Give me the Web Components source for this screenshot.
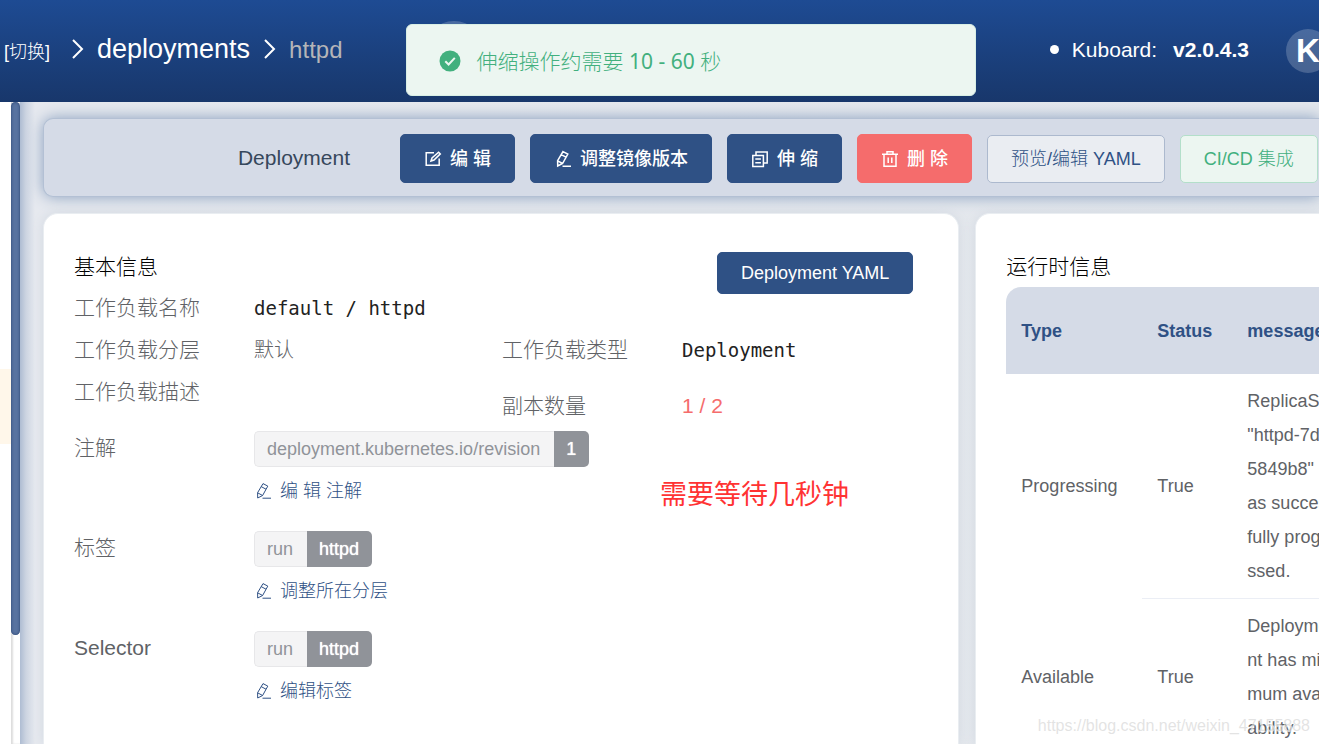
<!DOCTYPE html>
<html lang="zh-CN">
<head>
<meta charset="utf-8">
<title>Kuboard - httpd</title>
<style>
  html { height: 100%; }
  body {
    margin: 0;
    height: 100%;
    overflow: hidden;
    background: #fff;
    font-family: "Liberation Sans", "Noto Sans CJK SC", sans-serif;
    font-weight: 300;
    color: #606266;
  }
</style>
</head>
<body>
<kb-app></kb-app>

<template id="t-icon">
  <style>
    :host { display: inline-block; width: 18px; height: 18px; flex: none; }
    svg { display: block; width: 100%; height: 100%; fill: none; stroke: currentColor; stroke-width: 1.5; }
  </style>
  <svg viewBox="0 0 18 18" aria-hidden="true"></svg>
</template>

<template id="t-button">
  <style>
    :host { display: block; flex: none; }
    button {
      box-sizing: border-box; display: flex; align-items: center; gap: 8px;
      height: 49px; padding: 0 23px; border: 1px solid #2f5185; border-radius: 5px;
      background: #2f5185; color: #fff; white-space: nowrap; cursor: pointer;
      font: 500 18px/24px "Liberation Sans", "Noto Sans CJK SC", sans-serif;
    }
    :host([kind="danger"]) button { background: #f56c6c; border-color: #f56c6c; }
    :host([kind="plain"]) button { height: 48px; background: #eaedf2; border-color: #acb9ce; color: #2f5185; font-weight: 300; }
    :host([kind="success"]) button { height: 48px; background: #ecf6f1; border-color: #b3dfca; color: #42b07e; font-weight: 300; }
    :host([kind="yaml"]) button { height: 42px; font-weight: 400; }
  </style>
  <button type="button"><slot name="icon"></slot><slot></slot></button>
</template>

<template id="t-header">
  <style>
    :host {
      display: flex; align-items: center; box-sizing: border-box; height: 102px; flex: none;
      padding-left: 4px; overflow: hidden; position: relative; color: #fff;
      background: linear-gradient(#1e4b93, #18376b);
    }
    nav { display: flex; align-items: center; white-space: nowrap; font-weight: 400; height: 98px; margin-bottom: 4px; }
    a { color: inherit; text-decoration: none; }
    .switch { font-size: 18px; line-height: 24px; padding-top: 6px; font-weight: 300; }
    .chev { width: 12px; height: 20px; fill: none; stroke: #fff; stroke-width: 2; margin: 0 13px 0 22px; }
    .chev.two { margin: 0 13px 0 14px; }
    .section { font-size: 27px; line-height: 36px; }
    .current { font-size: 24px; line-height: 32px; padding-top: 2px; color: #b5b5b8; }
    .orb { width: 60px; height: 60px; margin-left: 81px; border-radius: 50%; background: rgba(255,255,255,.2); flex: none; }
    .version { display: flex; align-items: center; margin: 0 0 3px auto; font-size: 21px; line-height: 28px; white-space: nowrap; }
    .version i { width: 9px; height: 9px; border-radius: 50%; background: #fff; margin-right: 13px; }
    .version b { font-weight: 700; margin-left: 16px; }
    .avatar {
      width: 44px; height: 44px; margin: 0 -11px 0 37px; border-radius: 50%; flex: none;
      background: rgba(255,255,255,.2); text-align: center; font: 700 33px/44px "Liberation Sans", sans-serif;
    }
  </style>
  <nav aria-label="breadcrumb">
    <a class="switch" href="#">[切换]</a>
    <svg class="chev" viewBox="0 0 12 20"><path d="M1 1l9 9-9 9"/></svg>
    <a class="section" href="#">deployments</a>
    <svg class="chev two" viewBox="0 0 12 20"><path d="M1 1l9 9-9 9"/></svg>
    <span class="current">httpd</span>
  </nav>
  <span class="orb"></span>
  <div class="version"><i></i><span>Kuboard:</span><b>v2.0.4.3</b></div>
  <span class="avatar">K</span>
</template>

<template id="t-toast">
  <style>
    :host {
      position: absolute; z-index: 5; top: 24px; left: calc(50% - 254px); width: 570px; height: 72px;
      box-sizing: border-box; display: flex; align-items: center; gap: 16px; padding: 2px 0 0 32px;
      border: 1px solid #d9efe5; border-radius: 6px; background: #ecf6f1; color: #42b07e;
      font: 300 21px/28px "Noto Sans", "Noto Sans CJK SC", sans-serif;
    }
    svg { width: 22px; height: 22px; flex: none; }
    ::slotted(b) { font-weight: 400; }
  </style>
  <svg viewBox="0 0 22 22" aria-hidden="true"><circle cx="11" cy="11" r="10.5" fill="#42b07e"/><path d="M6.3 11.2l3.3 3.3 6.2-6.6" fill="none" stroke="#ecf6f1" stroke-width="2"/></svg>
  <span><slot></slot></span>
</template>

<template id="t-side">
  <style>
    :host { display: flex; flex: none; width: 20px; background: #fff; }
    .menu { width: 11px; flex: none; }
    .menu div { margin-top: 267px; height: 75px; background: #fff7ea; }
    .track { flex: 1; background: #fff; box-shadow: inset 2px 0 2px #ddd; }
    .thumb { height: 533px; border-radius: 5px; background: #5873a0; box-shadow: inset 0 0 3px #243f6c; }
  </style>
  <div class="menu"><div></div></div>
  <div class="track"><div class="thumb"></div></div>
</template>

<template id="t-toolbar">
  <style>
    :host {
      display: flex; align-items: flex-end; gap: 15px; box-sizing: border-box; height: 79px;
      padding-bottom: 13px; border: 1px solid #b3c0d4; border-right: 0; border-radius: 10px 0 0 10px;
      background: #d5dbe7; box-shadow: 0 0 15px #8ba1c0;
    }
    .name { width: 306px; margin-right: 35px; flex: none; text-align: right; color: #36475c; font-size: 21px; font-weight: 400; line-height: 50px; }
  </style>
  <span class="name">Deployment</span>
  <slot></slot>
</template>

<template id="t-card">
  <style>
    :host {
      display: block; position: relative; box-sizing: border-box; min-width: 0; padding: 31px 45px 0 30px;
      border: 1px solid #e9edf1; border-bottom: 0; border-radius: 15px 15px 0 0; background: #fff; box-shadow: 0 0 12px #d3d9e2;
    }
    :host([flush]) { padding-right: 0; border-right: 0; border-top-right-radius: 0; overflow: hidden; }
    header { display: flex; justify-content: space-between; align-items: flex-start; height: 42px; }
    h2 { margin: 0; font-size: 21px; font-weight: 300; line-height: 44px; color: #000; white-space: nowrap; }
    ::slotted([slot="action"]) { margin-top: 7px; }
  </style>
  <header><h2><slot name="title"></slot></h2><slot name="action"></slot></header>
  <slot></slot>
</template>

<template id="t-field">
  <style>
    :host { display: grid; grid-template-columns: 180px 1fr; font-size: 21px; line-height: 42px; white-space: nowrap; }
    .value { font-size: 20px; min-width: 0; }
    :host([mono]) .value { font: 400 19px/42px "DejaVu Sans Mono", monospace; color: #222; }
    :host([alert]) .value { font-size: 21px; font-weight: 400; color: #f56c6c; }
  </style>
  <span><slot name="label"></slot></span>
  <div class="value"><slot></slot></div>
</template>

<template id="t-tag">
  <style>
    :host { display: flex; width: max-content; height: 36px; margin: 4px 0 3px; font-size: 18px; line-height: 36px; font-weight: 400; }
    .key, .val { box-sizing: border-box; padding: 0 13px 0 12px; }
    .key { border: 1px solid #e7e7e9; border-right: 0; border-radius: 5px 0 0 5px; background: #f4f4f5; color: #909399; line-height: 34px; padding-right: 14px; }
    .val { border-radius: 0 5px 5px 0; background: #909399; color: #fff; text-shadow: 0 0 1px #fff; }
  </style>
  <span class="key"><slot name="key"></slot></span><span class="val"><slot></slot></span>
</template>

<template id="t-link">
  <style>
    :host { display: block; height: 42px; margin-bottom: 15px; font-size: 18px; line-height: 42px; }
    a { display: inline-flex; align-items: center; gap: 8px; color: #2f5185; text-decoration: none; }
  </style>
  <a href="#"><kb-icon name="edit-line" thin></kb-icon><span><slot></slot></span></a>
</template>

<template id="t-basic">
  <style>
    :host { display: block; }
    .pairs { display: grid; grid-template-columns: 428px 1fr; }
    .wide { grid-column: 1 / -1; }
    .late { margin-top: 14px; }
    .note { position: absolute; left: 616px; top: 261px; font-size: 27px; font-weight: 400; line-height: 40px; color: #ff3333; white-space: nowrap; }
  </style>
  <div class="pairs">
    <kb-field class="wide" mono><span slot="label">工作负载名称</span>default / httpd</kb-field>
    <kb-field><span slot="label">工作负载分层</span>默认</kb-field>
    <kb-field mono><span slot="label">工作负载类型</span>Deployment</kb-field>
    <kb-field><span slot="label">工作负载描述</span></kb-field>
    <kb-field class="late" alert><span slot="label">副本数量</span>1 / 2</kb-field>
  </div>
  <kb-field><span slot="label">注解</span><kb-tag><span slot="key">deployment.kubernetes.io/revision</span>1</kb-tag><kb-link>编 辑 注解</kb-link></kb-field>
  <kb-field><span slot="label">标签</span><kb-tag><span slot="key">run</span>httpd</kb-tag><kb-link>调整所在分层</kb-link></kb-field>
  <kb-field><span slot="label">Selector</span><kb-tag><span slot="key">run</span>httpd</kb-tag><kb-link>编辑标签</kb-link></kb-field>
  <span class="note">需要等待几秒钟</span>
</template>

<template id="t-conditions">
  <style>
    :host { display: block; overflow: hidden; border-radius: 15px 0 0 0; }
    table { width: 100%; table-layout: fixed; border-collapse: collapse; font-size: 18px; line-height: 34px; font-weight: 400; }
    th, td { padding: 10px 0 10px 15px; text-align: left; white-space: nowrap; overflow: hidden; }
    th { height: 67px; background: #d5dbe7; color: #2f5185; font-weight: 700; }
    td + td { border-bottom: 1px solid #ebeef5; }
    td span { display: block; }
    .type { width: 121px; } .status { width: 75px; }
  </style>
  <table>
    <thead><tr><th class="type">Type</th><th class="status">Status</th><th>message</th></tr></thead>
    <tbody>
      <tr><td>Progressing</td><td>True</td><td><span>ReplicaSe</span><span>"httpd-7d</span><span>5849b8"</span><span>as succes</span><span>fully progre</span><span>ssed.</span></td></tr>
      <tr><td>Available</td><td>True</td><td><span>Deployme</span><span>nt has mini</span><span>mum avail</span><span>ability.</span></td></tr>
    </tbody>
  </table>
</template>

<template id="t-app">
  <style>
    :host { display: flex; flex-direction: column; height: 100%; position: relative; overflow: hidden; }
    .body { display: flex; flex: 1; min-height: 0; }
    main {
      flex: 1; min-width: 0; overflow: hidden; padding: 16px 0 0 23px; display: flex; flex-direction: column; gap: 16px;
      background: linear-gradient(90deg, #aebcd2, #ccd4e1 6px, #e6e9ef 15px, #e6e9ee 40px, #e3e7ec);
    }
    .cards { flex: 1; display: grid; grid-template-columns: minmax(0, 8fr) minmax(0, 3fr); gap: 16px; min-height: 0; }
    .mark { position: absolute; right: 9px; bottom: 6px; font-size: 16px; font-weight: 400; line-height: 24px; color: rgba(215,215,215,.7); text-shadow: 1px 1px 1px rgba(255,255,255,.8); }
  </style>
  <kb-header></kb-header>
  <kb-toast role="status">伸缩操作约需要 <b>10 - 60</b> 秒</kb-toast>
  <div class="body">
    <kb-side></kb-side>
    <main>
      <kb-toolbar>
        <kb-button><kb-icon slot="icon" name="edit-box"></kb-icon>编 辑</kb-button>
        <kb-button><kb-icon slot="icon" name="edit-line"></kb-icon>调整镜像版本</kb-button>
        <kb-button><kb-icon slot="icon" name="copy"></kb-icon>伸 缩</kb-button>
        <kb-button kind="danger"><kb-icon slot="icon" name="trash"></kb-icon>删 除</kb-button>
        <kb-button kind="plain">预览/编辑 YAML</kb-button>
        <kb-button kind="success">CI/CD 集成</kb-button>
      </kb-toolbar>
      <div class="cards">
        <kb-card><span slot="title">基本信息</span><kb-button slot="action" kind="yaml">Deployment YAML</kb-button><kb-basic></kb-basic></kb-card>
        <kb-card flush><span slot="title">运行时信息</span><kb-conditions></kb-conditions></kb-card>
      </div>
    </main>
  </div>
  <span class="mark">https://blog.csdn.net/weixin_47155888</span>
</template>

<script>
  const icons = {
    'edit-box': '<path d="M10 2.7H2.2v12.6h13V8.4M7 11l1-3 6.6-5.8 1.7 1.7L10 10z"/>',
    'edit-line': '<path d="M9 1.6l4.8 2.5-5.2 9.4-4.9 2.5-.1-5.3zM7.2 4.6l4.8 2.6M3.6 10.8l5 2.7M8.5 16.2H17"/>',
    'copy': '<path d="M1.8 5.4h10.6v11H1.8zM5 5V1.9h11.2V13H13M4.3 9h5.6M4.3 12.7h5.6"/>',
    'trash': '<path d="M1 4.2h16M3 4.2v12h12v-12M6 4V1.8h6V4M7.2 7.5v5.6M10.8 7.5v5.6"/>'
  };

  class KbElement extends HTMLElement {
    constructor() {
      super();
      const name = this.localName.slice(3);
      this.attachShadow({ mode: 'open' })
        .append(document.getElementById('t-' + name).content.cloneNode(true));
    }
  }

  class KbIcon extends KbElement {
    connectedCallback() {
      const svg = this.shadowRoot.querySelector('svg');
      svg.innerHTML = icons[this.getAttribute('name')];
      if (this.hasAttribute('thin')) svg.style.strokeWidth = '1';
    }
  }

  customElements.define('kb-icon', KbIcon);
  for (const name of ['button', 'header', 'toast', 'side', 'toolbar', 'tag', 'link', 'field', 'card', 'basic', 'conditions', 'app']) {
    customElements.define('kb-' + name, class extends KbElement {});
  }
</script>
</body>
</html>
